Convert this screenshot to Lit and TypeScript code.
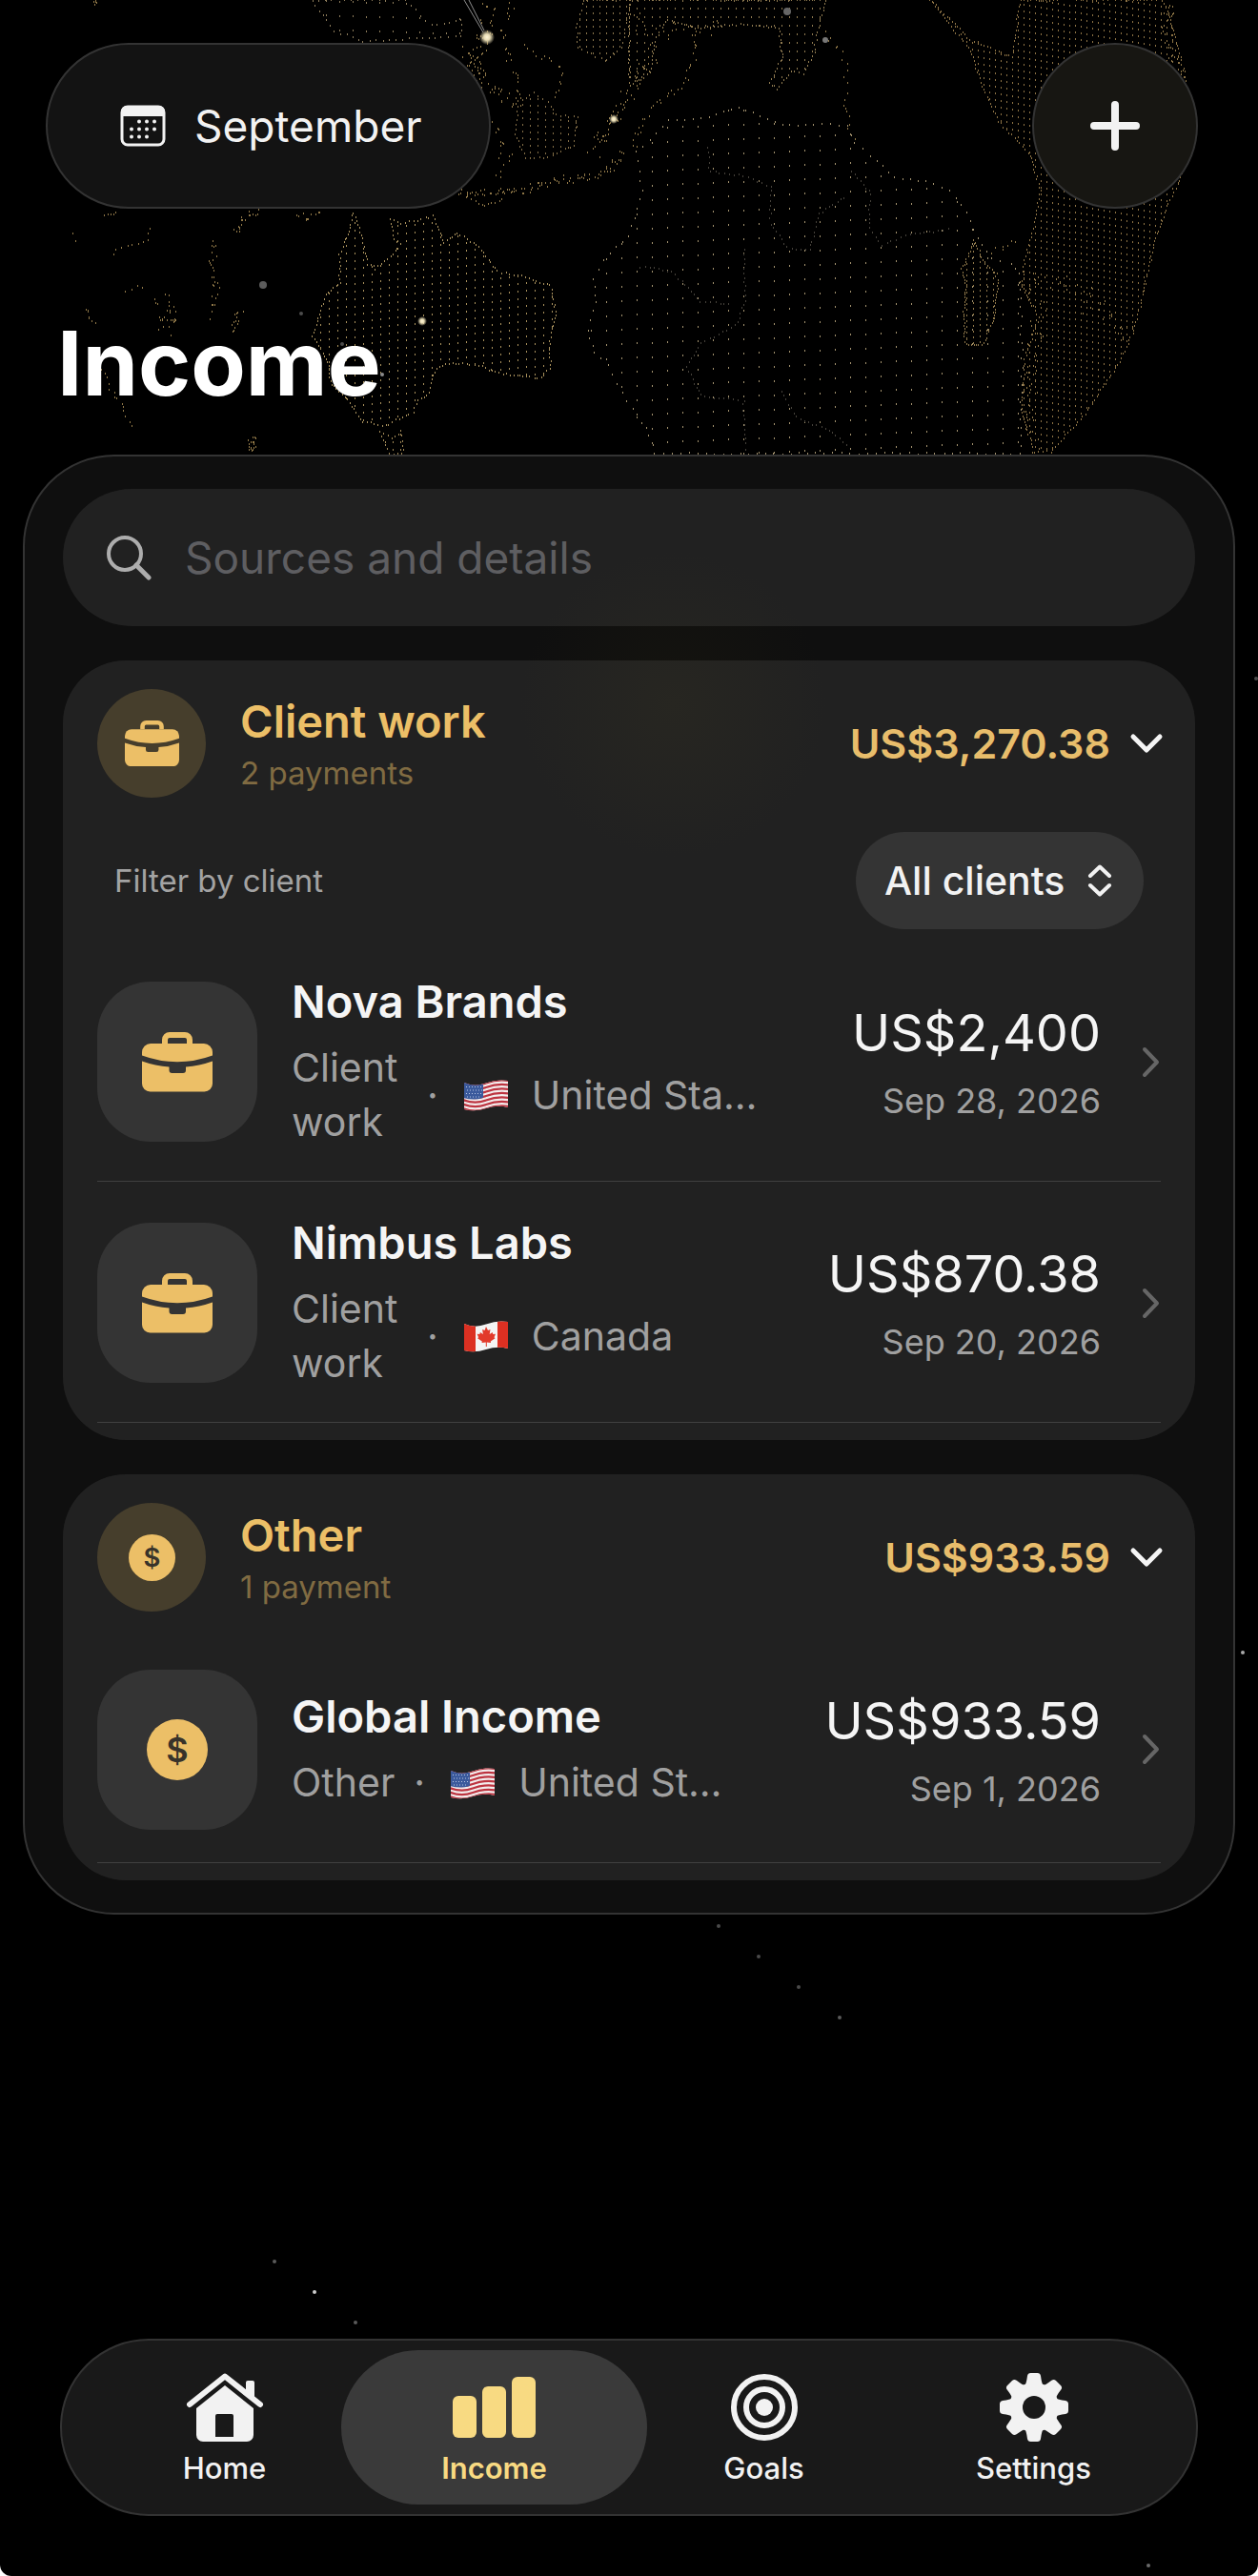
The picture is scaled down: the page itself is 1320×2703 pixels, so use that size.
import { LitElement, html, svg, css, nothing } from 'lit';
import { customElement, property, state } from 'lit/decorators.js';

type Point = [number, number];

interface Land {
  outline: Point[];
  dx: number;
  dy: number;
  slope: number;
  tone: string;
  coast: number;
}

interface Payment {
  name: string;
  category: string;
  flag: string;
  country: string;
  amount: string;
  date: string;
}

interface Group {
  title: string;
  count: string;
  total: string;
  icon: string;
  filter: boolean;
  payments: Payment[];
}

const GROUPS: Group[] = [
  {
    title: 'Client work',
    count: '2 payments',
    total: 'US$3,270.38',
    icon: 'briefcase',
    filter: true,
    payments: [
      {
        name: 'Nova Brands',
        category: 'Client work',
        flag: 'us',
        country: 'United Sta…',
        amount: 'US$2,400',
        date: 'Sep 28, 2026',
      },
      {
        name: 'Nimbus Labs',
        category: 'Client work',
        flag: 'ca',
        country: 'Canada',
        amount: 'US$870.38',
        date: 'Sep 20, 2026',
      },
    ],
  },
  {
    title: 'Other',
    count: '1 payment',
    total: 'US$933.59',
    icon: 'coin',
    filter: false,
    payments: [
      {
        name: 'Global Income',
        category: 'Other',
        flag: 'us',
        country: 'United St…',
        amount: 'US$933.59',
        date: 'Sep 1, 2026',
      },
    ],
  },
];

const TABS = ['Home', 'Income', 'Goals', 'Settings'];

// Dotted map. Each land is filled with a slanted lattice and edged with coast dots.
const LANDS: Land[] = [
  {
    outline: [[371, 223], [364, 247], [356, 267], [356, 297], [341, 310], [335, 330], [327, 353],
      [343, 377], [347, 403], [364, 420], [381, 442], [405, 447], [421, 437], [433, 433], [438, 420],
      [448, 415], [455, 390], [467, 382], [497, 382], [524, 392], [568, 397], [577, 387], [576, 357],
      [583, 330], [577, 300], [547, 290], [522, 285], [499, 257], [480, 245], [465, 255], [454, 227],
      [421, 235], [410, 230], [412, 250], [419, 257], [410, 270], [394, 282], [385, 277], [379, 247]],
    dx: 9, dy: 8, slope: -0.09, tone: '#a8905c', coast: 4,
  },
  {
    outline: [[398, 453], [410, 460], [421, 453], [422, 476], [408, 476]],
    dx: 8, dy: 8, slope: 0, tone: '#a08856', coast: 5,
  },
  {
    outline: [[673, 200], [668, 160], [702, 127], [744, 123], [774, 112], [820, 132], [870, 130],
      [889, 133], [896, 150], [913, 163], [938, 187], [971, 190], [997, 200], [1014, 223], [1026, 250],
      [1039, 270], [1060, 277], [1070, 287], [1072, 377], [1070, 476], [687, 476], [681, 457],
      [668, 437], [648, 403], [638, 383], [623, 370], [617, 347], [625, 317], [623, 293], [633, 273],
      [660, 247]],
    dx: 16, dy: 15, slope: -0.04, tone: '#a3926e', coast: 9,
  },
  {
    outline: [[1022, 253], [1032, 275], [1045, 287], [1047, 303], [1041, 340], [1030, 362], [1013, 362],
      [1011, 330], [1013, 300], [1009, 283]],
    dx: 7, dy: 6, slope: -0.1, tone: '#8f784a', coast: 3,
  },
  {
    outline: [[976, 0], [1018, 42], [1062, 60], [1070, 0], [1220, 0], [1228, 20], [1243, 80],
      [1250, 160], [1237, 190], [1224, 217], [1211, 253], [1199, 310], [1188, 350], [1173, 383],
      [1136, 437], [1102, 474], [1085, 474], [1072, 433], [1075, 377], [1089, 333], [1072, 300],
      [1075, 273], [1085, 237], [1091, 200], [1081, 163], [1047, 127], [1030, 90], [1018, 53]],
    dx: 6, dy: 7, slope: 0.16, tone: '#8c7244', coast: 4,
  },
  {
    outline: [[660, 0], [866, 0], [858, 30], [854, 55], [843, 77], [830, 75], [815, 93], [807, 87],
      [820, 60], [817, 30], [780, 25], [730, 30], [700, 20], [688, 40], [682, 75], [660, 90]],
    dx: 8, dy: 9, slope: 0, tone: '#8f7a50', coast: 4,
  },
  {
    outline: [[326, 0], [351, 33], [381, 44], [484, 38], [484, 20], [452, 27], [425, 0]],
    dx: 14, dy: 15, slope: 0.03, tone: '#8c7b5a', coast: 7,
  },
  {
    outline: [[612, 0], [605, 30], [606, 50], [635, 64], [652, 50], [662, 0]],
    dx: 7, dy: 7, slope: 0, tone: '#8a754c', coast: 5,
  },
  {
    outline: [[543, 107], [560, 98], [575, 107], [583, 120], [606, 123], [602, 153], [575, 165],
      [551, 166], [541, 140]],
    dx: 8, dy: 7, slope: 0.05, tone: '#826d46', coast: 5,
  },
];

// Island chains: a line through the points with loose dots along it.
const CHAINS: { points: Point[]; spread: number; step: number }[] = [
  { points: [[488, 53], [498, 66], [505, 80], [520, 96], [543, 107]], spread: 7, step: 2 },
  { points: [[512, 0], [508, 36], [495, 60], [505, 80]], spread: 9, step: 2 },
  { points: [[535, 0], [528, 40], [540, 80], [548, 110]], spread: 5, step: 4 },
  { points: [[551, 50], [589, 70], [591, 80], [583, 107]], spread: 3, step: 5 },
  { points: [[484, 203], [505, 203], [547, 200], [589, 188], [623, 187], [644, 173], [656, 160]], spread: 4, step: 2 },
  { points: [[484, 203], [508, 218], [530, 206]], spread: 2, step: 4 },
  { points: [[518, 130], [528, 150], [530, 170], [520, 190]], spread: 8, step: 4 },
  { points: [[620, 160], [644, 128], [656, 105], [672, 78], [686, 50]], spread: 8, step: 2 },
  { points: [[660, 20], [700, 34], [760, 30]], spread: 10, step: 4 },
  { points: [[726, 30], [728, 60], [720, 85], [700, 100], [680, 118], [668, 140], [661, 160]], spread: 4, step: 4 },
  { points: [[866, 35], [884, 58], [890, 90], [886, 120], [896, 150]], spread: 4, step: 6 },
  { points: [[248, 246], [254, 228], [274, 221]], spread: 4, step: 2 },
  { points: [[312, 224], [320, 232], [338, 222]], spread: 4, step: 3 },
  { points: [[110, 226], [125, 222]], spread: 1, step: 3 },
  { points: [[75, 245], [79, 260]], spread: 2, step: 7 },
  { points: [[157, 240], [155, 252], [122, 262], [118, 273]], spread: 1, step: 6 },
  { points: [[224, 252], [222, 282], [227, 300], [223, 336]], spread: 4, step: 3 },
  { points: [[168, 318], [176, 332], [174, 344]], spread: 9, step: 1 },
  { points: [[90, 322], [100, 342]], spread: 3, step: 3 },
  { points: [[254, 328], [246, 340], [240, 350]], spread: 5, step: 2 },
  { points: [[131, 306], [144, 300], [156, 306]], spread: 1, step: 6 },
  { points: [[106, 388], [120, 416], [132, 432], [136, 452]], spread: 3, step: 5 },
  { points: [[264, 458], [265, 476]], spread: 4, step: 1 },
  { points: [[98, 0], [101, 5]], spread: 2, step: 1 },
  { points: [[1040, 262], [1062, 255], [1056, 262]], spread: 4, step: 5 },
  { points: [[1090, 290], [1120, 300], [1150, 320], [1190, 350]], spread: 12, step: 3 },
  { points: [[1075, 290], [1090, 330], [1080, 390], [1085, 470]], spread: 9, step: 3 },
  { points: [[1222, 0], [1226, 30], [1232, 60], [1240, 80]], spread: 7, step: 2 },
];

// Inner borders, drawn fainter than the coasts
const BORDERS: Point[][] = [
  [[742, 155], [745, 180], [780, 185], [808, 196], [808, 235], [826, 260], [850, 262], [858, 225], [890, 205]],
  [[893, 180], [912, 200], [912, 240], [925, 258], [950, 247], [1000, 240]],
  [[780, 262], [782, 315], [772, 342], [735, 360], [720, 385], [734, 415], [780, 420], [782, 476]],
  [[672, 280], [705, 285], [735, 316], [770, 320]],
  [[820, 410], [835, 438], [870, 452], [892, 470]],
];

const STARS = [
  { x: 276, y: 299, r: 4, fill: '#5c5c5c' },
  { x: 316, y: 329, r: 2, fill: '#4c4c4c' },
  { x: 359, y: 361, r: 2, fill: '#4c4c4c' },
  { x: 401, y: 393, r: 2, fill: '#8c8c8c' },
  { x: 826, y: 12, r: 4, fill: '#666666' },
  { x: 866, y: 42, r: 3, fill: '#777777' },
  { x: 1318, y: 712, r: 2, fill: '#4a4a4a' },
  { x: 1304, y: 1734, r: 2, fill: '#aaaaaa' },
  { x: 754, y: 2021, r: 2, fill: '#4a4a4a' },
  { x: 796, y: 2053, r: 2, fill: '#4a4a4a' },
  { x: 838, y: 2085, r: 2, fill: '#4a4a4a' },
  { x: 881, y: 2117, r: 2, fill: '#5a5a5a' },
  { x: 288, y: 2373, r: 2, fill: '#5a5a5a' },
  { x: 330, y: 2405, r: 2, fill: '#cccccc' },
  { x: 373, y: 2437, r: 2, fill: '#5a5a5a' },
  { x: 1205, y: 2692, r: 2, fill: '#6a6a6a' },
];

let seed = 7;
function random() {
  seed = (seed * 16807) % 2147483647;
  return seed / 2147483647;
}

function inside(x: number, y: number, poly: Point[]) {
  let hit = false;
  for (let i = 0, j = poly.length - 1; i < poly.length; j = i++) {
    const [xi, yi] = poly[i];
    const [xj, yj] = poly[j];
    if (yi > y !== yj > y && x < ((xj - xi) * (y - yi)) / (yj - yi) + xi) {
      hit = !hit;
    }
  }
  return hit;
}

// Snapped to whole pixels so the dots stay crisp
function dot(x: number, y: number) {
  return `M${Math.round(x)} ${Math.round(y)}h1`;
}

function walk(points: Point[], step: number, spread: number) {
  let d = '';
  for (let i = 1; i < points.length; i++) {
    const [x0, y0] = points[i - 1];
    const [x1, y1] = points[i];
    const n = Math.max(1, Math.round(Math.hypot(x1 - x0, y1 - y0) / step));
    for (let k = 0; k < n; k++) {
      const x = x0 + ((x1 - x0) * k) / n + (random() - 0.5) * spread * 2;
      const y = y0 + ((y1 - y0) * k) / n + (random() - 0.5) * spread * 2;
      if (y < 477) d += dot(x, y);
    }
  }
  return d;
}

function fillLand(land: Land) {
  let d = '';
  for (let row = -30; row * land.dy < 560; row++) {
    for (let x = 300; x < 1260; x += land.dx) {
      const y = row * land.dy + (x - 300) * land.slope;
      if (inside(x, y, land.outline)) d += dot(x, y);
    }
  }
  return d + walk([...land.outline, land.outline[0]], land.coast, 1);
}

const LAND_PATHS = LANDS.map((land) => ({ d: fillLand(land), tone: land.tone }));
const CHAIN_PATH = CHAINS.map((c) => walk(c.points, c.step, c.spread)).join('');
const BORDER_PATH = BORDERS.map((b) => walk(b, 5, 1)).join('');

function icon(name: string) {
  switch (name) {
    case 'calendar':
      return html`<svg width="48" height="44" viewBox="0 0 48 44" aria-hidden="true">
        <rect x="2" y="2" width="44" height="40" rx="6" fill="none" stroke="#f2f2f2" stroke-width="3"></rect>
        <path d="M1 12V7a6 6 0 0 1 6-6h34a6 6 0 0 1 6 6v5z" fill="#f2f2f2"></path>
        <path d="M20 17.500h0M28 17.500h0M36 17.500h0M12 25.500h0M20 25.500h0M28 25.500h0M36 25.500h0M12 33.500h0M20 33.500h0M28 33.500h0"
          stroke="#f2f2f2" stroke-width="4" stroke-linecap="round"></path>
      </svg>`;
    case 'plus':
      return html`<svg width="52" height="52" viewBox="0 0 52 52" aria-hidden="true">
        <path d="M26 4v44M4 26h44" stroke="#f2f2f2" stroke-width="8" stroke-linecap="round"></path>
      </svg>`;
    case 'search':
      return html`<svg width="47" height="47" viewBox="0 0 47 47" aria-hidden="true">
        <circle cx="19" cy="19" r="17" fill="none" stroke="#adadad" stroke-width="4"></circle>
        <path d="M31 31l13 13" stroke="#adadad" stroke-width="5" stroke-linecap="round"></path>
      </svg>`;
    case 'briefcase':
      return html`<svg viewBox="0 0 74 63" aria-hidden="true">
        <path d="M24 12V8a5 5 0 0 1 5-5h16a5 5 0 0 1 5 5v4" fill="none" stroke="#ecbf67" stroke-width="6"></path>
        <path d="M9 12h56a9 9 0 0 1 9 9v3.500Q37 38 0 24.500V21a9 9 0 0 1 9-9z" fill="#ecbf67"></path>
        <path d="M0 30.500Q14 35.500 28.500 36.500V40q0 3 3 3h11.500q3 0 3-3v-3.500Q60 35.500 74 30.500V54a8.500 8.500 0 0 1-8.500 8.500h-57A8.500 8.500 0 0 1 0 54z" fill="#ecbf67"></path>
      </svg>`;
    case 'coin':
      return html`<svg viewBox="0 0 64 64" aria-hidden="true">
        <circle cx="32" cy="32" r="32" fill="#ecbf67"></circle>
        <text x="32" y="45" text-anchor="middle" font-family="Inter, sans-serif" font-weight="600" font-size="36" fill="#38332a">$</text>
      </svg>`;
    case 'down':
      return html`<svg class="down" width="34" height="22" viewBox="0 0 34 22" aria-hidden="true">
        <path d="M5 4l14 14L33 4" fill="none" stroke="#f5f5f5" stroke-width="5" stroke-linecap="round" stroke-linejoin="round"></path>
      </svg>`;
    case 'right':
      return html`<svg width="20" height="33" viewBox="0 0 20 33" aria-hidden="true">
        <path d="M3 3l13 13.500L3 30" fill="none" stroke="#666666" stroke-width="4" stroke-linecap="round" stroke-linejoin="round"></path>
      </svg>`;
    case 'updown':
      return html`<svg class="updown" width="26" height="34" viewBox="0 0 26 34" aria-hidden="true">
        <path d="M3 12L13 2.500L23 12M3 22l10 9.500L23 22" fill="none" stroke="#f2f2f2" stroke-width="4" stroke-linecap="round" stroke-linejoin="round"></path>
      </svg>`;
    case 'Home':
      return html`<svg width="82" height="72" viewBox="0 0 82 72" aria-hidden="true">
        <path d="M63 22V10a2 2 0 0 1 2-2h5a2 2 0 0 1 2 2v20z" fill="#f2f2f2"></path>
        <path d="M4 33L41 3.500L78 33" fill="none" stroke="#f2f2f2" stroke-width="6" stroke-linecap="round" stroke-linejoin="round"></path>
        <path fill-rule="evenodd" d="M11 37L41 13l30 24v28a7 7 0 0 1-7 7H18a7 7 0 0 1-7-7zM33 43a2 2 0 0 0-2 2v22h19V45a2 2 0 0 0-2-2z" fill="#f2f2f2"></path>
      </svg>`;
    case 'Income':
      return html`<svg width="88" height="72" viewBox="0 0 88 72" aria-hidden="true">
        <g fill="#f8da82">
          <rect x="0" y="24" width="25" height="44" rx="6"></rect>
          <rect x="31" y="14" width="25" height="54" rx="6"></rect>
          <rect x="62" y="4" width="25" height="64" rx="6"></rect>
        </g>
      </svg>`;
    case 'Goals':
      return html`<svg width="72" height="72" viewBox="0 0 72 72" aria-hidden="true">
        <circle cx="36" cy="36" r="32" fill="none" stroke="#f2f2f2" stroke-width="6"></circle>
        <circle cx="36" cy="36" r="19" fill="none" stroke="#f2f2f2" stroke-width="6"></circle>
        <circle cx="36" cy="36" r="9" fill="#f2f2f2"></circle>
      </svg>`;
    case 'Settings':
      return html`<svg width="72" height="72" viewBox="0 0 72 72" aria-hidden="true">
        <defs>
          <mask id="hub">
            <rect width="72" height="72" fill="#ffffff"></rect>
            <circle cx="36" cy="36" r="12" fill="#000000"></circle>
          </mask>
        </defs>
        <g mask="url(#hub)" fill="#f2f2f2">
          <circle cx="36" cy="36" r="26"></circle>
          ${[0, 45, 90, 135, 180, 225, 270, 315].map(
            (a) => svg`<path transform="rotate(${a} 36 36)" d="M26 14Q28 11 29 3q.5-3 3.500-3h7q3 0 3.500 3 1 8 3 11z"></path>`
          )}
        </g>
      </svg>`;
    default:
      return nothing;
  }
}

function flag(code: string) {
  const wave = 'M1 4Q12 9 24 4.500T47 2V30Q36 27 24 31T1 32z';
  if (code === 'ca') {
    return html`<svg class="flag" width="48" height="34" viewBox="0 0 48 34" role="img" aria-label="Canada flag">
      <defs><clipPath id="ca"><path d=${wave}></path></clipPath></defs>
      <g clip-path="url(#ca)">
        <rect width="48" height="34" fill="#f4f4f4"></rect>
        <rect width="13" height="34" fill="#dc3022"></rect>
        <rect x="36" width="12" height="34" fill="#dc3022"></rect>
        <path d="M24 7l2 4 2.500-1-.8 5 3-2 .6 2 2.700-.3-1.500 3.500 1 1-4.700 3.200.2 1.600-4.200-.6V28h-1v-4.600l-4.200.6.2-1.600-4.700-3.200 1-1-1.500-3.500 2.700.3.6-2 3 2-.8-5 2.500 1z" fill="#e23a2b"></path>
      </g>
    </svg>`;
  }
  return html`<svg class="flag" width="48" height="34" viewBox="0 0 48 34" role="img" aria-label="United States flag">
    <defs><clipPath id="us"><path d=${wave}></path></clipPath></defs>
    <g clip-path="url(#us)">
      <rect width="48" height="34" fill="#f3eded"></rect>
      ${[0, 1, 2, 3, 4, 5, 6].map((i) => {
        const y = 4 + i * 4.5;
        return svg`<path d="M0 ${y}Q12 ${y + 5} 24 ${y + 0.5}T48 ${y - 2}" fill="none" stroke="#bd3440" stroke-width="2.300"></path>`;
      })}
      <path d="M0 3Q11 8 21 5.500V20Q11 23 0 20z" fill="#3b5a9c"></path>
      <path d="M3 8.500h17M4 12h17M3 15.500h17M4 19h15" stroke="#b9c6e2" stroke-width="1" stroke-dasharray="1 2"></path>
    </g>
  </svg>`;
}

@customElement('star-map')
export class StarMap extends LitElement {
  static styles = css`
    :host {
      display: block;
    }

    .sky {
      display: block;
      width: 100%;
    }

    .dots {
      fill: none;
      stroke-width: 2;
    }
  `;

  render() {
    return html`
      <svg class="sky" viewBox="0 0 1320 2703" aria-hidden="true">
        <defs>
          <radialGradient id="glow">
            <stop offset="0" stop-color="#fff6d8"></stop>
            <stop offset="0.4" stop-color="#e8dcb4"></stop>
            <stop offset="1" stop-color="#e8dcb4" stop-opacity="0"></stop>
          </radialGradient>
        </defs>
        ${LAND_PATHS.map((p) => svg`<path class="dots" d=${p.d} stroke=${p.tone}></path>`)}
        <path class="dots" d=${CHAIN_PATH} stroke="#8f7747"></path>
        <path class="dots" d=${BORDER_PATH} stroke="#45413a"></path>
        <path d="M487 0l20 34M492 0l16 32" stroke="#8f8f8f" stroke-width="1"></path>
        <circle cx="511" cy="39" r="8" fill="url(#glow)"></circle>
        <circle cx="443" cy="337" r="5" fill="url(#glow)"></circle>
        <circle cx="644" cy="125" r="5" fill="url(#glow)"></circle>
        ${STARS.map((s) => svg`<circle cx=${s.x} cy=${s.y} r=${s.r} fill=${s.fill}></circle>`)}
      </svg>
    `;
  }
}

@customElement('income-group')
export class IncomeGroup extends LitElement {
  @property({ attribute: false }) group!: Group;
  @state() private open = true;

  static styles = css`
    :host {
      display: block;
      padding: 30px 36px 18px;
      border-radius: 66px;
      background-color: rgba(255, 255, 255, 0.08);
      font-family: Inter, 'Liberation Sans', sans-serif;
    }

    .head {
      display: flex;
      align-items: center;
      width: 100%;
      padding: 0;
      margin-bottom: 24px;
      border: none;
      background: none;
      font-family: inherit;
      text-align: left;
      cursor: pointer;
    }

    .badge {
      display: flex;
      align-items: center;
      justify-content: center;
      flex: none;
      width: 114px;
      height: 114px;
      margin-right: 36px;
      border-radius: 50%;
      background-color: #463e2c;
    }

    .badge .briefcase {
      width: 57px;
    }

    .badge .coin {
      width: 49px;
    }

    .briefcase,
    .coin {
      display: flex;
    }

    .briefcase svg,
    .coin svg {
      width: 100%;
    }

    .titles {
      display: flex;
      flex-direction: column;
      flex: 1;
      gap: 4px;
    }

    .title {
      color: #ecbf67;
      font-size: 47px;
      font-weight: 600;
      line-height: 58px;
    }

    .count {
      color: #806b42;
      font-size: 33px;
      line-height: 42px;
    }

    .total {
      margin-right: 19px;
      color: #e8bd6b;
      font-size: 43px;
      font-weight: 600;
      line-height: 54px;
    }

    .down {
      overflow: visible;
    }

    .filter {
      display: flex;
      align-items: center;
      justify-content: space-between;
      padding: 12px 18px;
    }

    .filter-label {
      color: #a3a3a3;
      font-size: 33px;
      line-height: 42px;
    }

    .picker {
      position: relative;
      display: flex;
      align-items: center;
    }

    .picker select {
      appearance: none;
      height: 102px;
      padding: 0 82px 0 30px;
      border: none;
      border-radius: 51px;
      background-color: #343434;
      color: #f2f2f2;
      font-family: inherit;
      font-size: 41px;
      font-weight: 500;
    }

    .updown {
      position: absolute;
      right: 33px;
      pointer-events: none;
    }

    .row {
      display: flex;
      align-items: center;
      box-sizing: border-box;
      min-height: 240px;
      padding: 35px 0 33px;
      border-bottom: 1px solid #404040;
      text-decoration: none;
    }

    .tile {
      display: flex;
      align-items: center;
      justify-content: center;
      flex: none;
      width: 168px;
      height: 168px;
      margin-right: 36px;
      border-radius: 56px;
      background-color: #343434;
    }

    .tile .briefcase {
      width: 74px;
    }

    .tile .coin {
      width: 64px;
    }

    .info {
      display: flex;
      flex-direction: column;
      flex: 1;
      gap: 12px;
      min-width: 0;
    }

    .name {
      color: #f5f5f5;
      font-size: 47px;
      font-weight: 600;
      line-height: 58px;
      white-space: nowrap;
    }

    .meta {
      display: flex;
      align-items: center;
      color: #a0a0a0;
      font-size: 41px;
      line-height: 57px;
    }

    .category {
      flex: none;
      max-width: 122px;
    }

    .point {
      margin: 0 26px 0 20px;
    }

    .flag {
      flex: none;
      margin-right: 24px;
    }

    .country {
      white-space: nowrap;
    }

    .sum {
      display: flex;
      flex-direction: column;
      flex: none;
      gap: 16px;
      margin-right: 43px;
      text-align: right;
    }

    .amount {
      color: #f5f5f5;
      font-size: 54px;
      line-height: 66px;
    }

    .date {
      color: #a0a0a0;
      font-size: 36px;
      line-height: 44px;
    }
  `;

  private toggle() {
    this.open = !this.open;
  }

  private renderRow(p: Payment) {
    return html`
      <a class="row" href="#payment">
        <span class="tile"><span class=${this.group.icon}>${icon(this.group.icon)}</span></span>
        <span class="info">
          <span class="name">${p.name}</span>
          <span class="meta">
            <span class="category">${p.category}</span>
            <span class="point">·</span>
            ${flag(p.flag)}
            <span class="country">${p.country}</span>
          </span>
        </span>
        <span class="sum">
          <span class="amount">${p.amount}</span>
          <span class="date">${p.date}</span>
        </span>
        ${icon('right')}
      </a>
    `;
  }

  render() {
    const g = this.group;
    return html`
      <button class="head" aria-expanded=${this.open} @click=${this.toggle}>
        <span class="badge"><span class=${g.icon}>${icon(g.icon)}</span></span>
        <span class="titles">
          <span class="title">${g.title}</span>
          <span class="count">${g.count}</span>
        </span>
        <span class="total">${g.total}</span>
        ${icon('down')}
      </button>
      ${this.open && g.filter
        ? html`
            <div class="filter">
              <label class="filter-label" for="client">Filter by client</label>
              <div class="picker">
                <select id="client">
                  <option>All clients</option>
                </select>
                ${icon('updown')}
              </div>
            </div>
          `
        : nothing}
      ${this.open ? g.payments.map((p) => this.renderRow(p)) : nothing}
    `;
  }
}

@customElement('app-root')
export class AppRoot extends LitElement {
  @state() private tab = 'Income';

  static styles = css`
    :host {
      display: block;
      background-color: #ffffff;
      font-family: Inter, 'Liberation Sans', sans-serif;
    }

    .page {
      position: relative;
      display: flex;
      flex-direction: column;
      box-sizing: border-box;
      min-height: 100vh;
      padding: 45px 0 63px;
      border-radius: 0 0 12px 12px;
      background-color: #000000;
      overflow: hidden;
      isolation: isolate;
    }

    .backdrop {
      position: absolute;
      top: 0;
      left: 0;
      right: 0;
      z-index: -1;
    }

    .top {
      display: flex;
      justify-content: space-between;
      padding: 0 63px 0 48px;
    }

    .month,
    .add {
      display: flex;
      align-items: center;
      box-sizing: border-box;
      height: 174px;
      border: 2px solid #333333;
      border-radius: 87px;
      color: #f2f2f2;
      font-family: inherit;
      cursor: pointer;
    }

    .month {
      gap: 30px;
      padding: 0 70px 0 76px;
      background-color: #131313;
      font-size: 46px;
    }

    .add {
      justify-content: center;
      width: 174px;
      padding: 0;
      background-color: #171612;
    }

    h1 {
      margin: 102px 60px 36px;
      color: #ffffff;
      font-size: 94px;
      font-weight: 700;
      line-height: 120px;
    }

    .panel {
      display: flex;
      flex-direction: column;
      gap: 36px;
      box-sizing: border-box;
      margin: 0 24px 48px;
      padding: 34px 40px;
      border: 2px solid #333333;
      border-radius: 96px;
      background: radial-gradient(circle at 680px 260px, #15140f 0, #0f0f0f 160px);
    }

    .search {
      display: flex;
      align-items: center;
      gap: 35px;
      height: 144px;
      padding: 0 46px;
      border-radius: 72px;
      background-color: rgba(255, 255, 255, 0.08);
    }

    .search svg {
      flex: none;
    }

    .search input {
      flex: 1;
      min-width: 0;
      height: 72px;
      padding: 0;
      border: none;
      outline: none;
      background: none;
      color: #f2f2f2;
      font-family: inherit;
      font-size: 46px;
    }

    .search input::placeholder {
      color: #5e5e61;
      opacity: 1;
    }

    .tabs {
      display: grid;
      grid-template-columns: repeat(4, 1fr);
      margin: auto 63px 0;
      padding: 10px 29px;
      border: 2px solid #333333;
      border-radius: 95px;
      background-color: #191919;
    }

    .tab {
      display: flex;
      flex-direction: column;
      align-items: center;
      gap: 9px;
      height: 162px;
      margin: 0 -19px;
      padding: 24px 0 0;
      border: none;
      border-radius: 81px;
      background: none;
      color: #f2f2f2;
      font-family: inherit;
      font-size: 31px;
      font-weight: 500;
      line-height: 38px;
      cursor: pointer;
    }

    .tab[aria-current='page'] {
      background-color: #3a3a3a;
      color: #f8da82;
      font-weight: 600;
    }
  `;

  render() {
    return html`
      <div class="page">
        <star-map class="backdrop"></star-map>
        <header class="top">
          <button class="month">${icon('calendar')}<span>September</span></button>
          <button class="add" aria-label="Add income">${icon('plus')}</button>
        </header>
        <h1>Income</h1>
        <main class="panel">
          <label class="search">
            ${icon('search')}
            <input type="text" placeholder="Sources and details" aria-label="Sources and details" />
          </label>
          ${GROUPS.map((g) => html`<income-group .group=${g}></income-group>`)}
        </main>
        <nav class="tabs">
          ${TABS.map(
            (t) => html`
              <button class="tab" aria-current=${this.tab === t ? 'page' : 'false'} @click=${() => (this.tab = t)}>
                ${icon(t)}<span>${t}</span>
              </button>
            `
          )}
        </nav>
      </div>
    `;
  }
}
